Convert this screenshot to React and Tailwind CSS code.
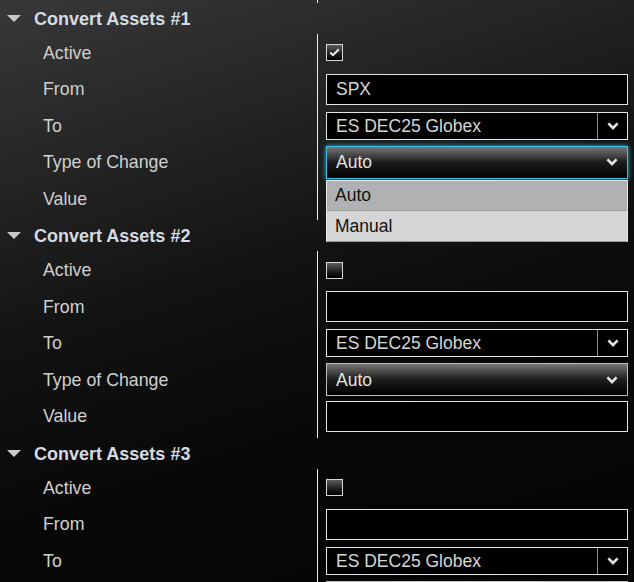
import { Fragment } from "react";

const sections = [
  { id: 1, active: true, from: "SPX", to: "ES DEC25 Globex", change: "Auto", focused: true },
  { id: 2, active: false, from: "", to: "ES DEC25 Globex", change: "Auto", focused: false },
  { id: 3, active: false, from: "", to: "ES DEC25 Globex", change: "Auto", focused: false },
];

const labels = ["Active", "From", "To", "Type of Change", "Value"];

const Chevron = () => (
  <svg width="12" height="8" viewBox="0 0 12 8" fill="none">
    <path d="M1.4 1.4 L6 6 L10.6 1.4" stroke="#e2e2e2" strokeWidth="2.7" strokeLinejoin="miter" />
  </svg>
);

const Checkbox = ({ checked }) => (
  <div className="flex h-[17px] w-[17px] items-center justify-center border border-[#d6d6d6] bg-[linear-gradient(#5c5c5c,#1c1c1c_60%,#000)]">
    {checked && (
      <svg width="11" height="9" viewBox="0 0 11 9" fill="none">
        <path d="M1.2 4.6 L4 7.2 L9.8 1.2" stroke="#f0f0f0" strokeWidth="2" />
      </svg>
    )}
  </div>
);

const TextBox = ({ value }) => (
  <div className="flex h-[31px] w-full items-center border border-[#e4e4e4] bg-black pl-[9px] text-[17.5px] leading-[20px] text-[#d6d6d6]">
    {value}
  </div>
);

const ComboBox = ({ value }) => (
  <div className="flex h-[28px] w-full border border-[#e4e4e4] bg-black text-[17.5px] leading-[20px] text-[#d6d6d6]">
    <div className="flex flex-1 items-center pl-[9px]">{value}</div>
    <div className="flex w-[30px] items-center justify-center border-l border-[#8c8c8c]">
      <Chevron />
    </div>
  </div>
);

const ChangeSelect = ({ value, focused }) => (
  <div className="relative w-full">
    <div
      className={
        focused
          ? "flex h-[33px] w-full items-center justify-between border border-[#3ac3e6] bg-[linear-gradient(#767676,#1c1c1c_50%,#000)] pl-[9px] pr-[9px] text-[17.5px] leading-[20px] text-[#e2e2e2] shadow-[0_0_5px_#2fb7dc]"
          : "flex h-[33px] w-full items-center justify-between border border-[#bdbdbd] bg-[linear-gradient(#767676,#1c1c1c_50%,#000)] pl-[9px] pr-[9px] text-[17.5px] leading-[20px] text-[#e2e2e2]"
      }
    >
      <span>{value}</span>
      <Chevron />
    </div>
    {focused && (
      <div className="absolute left-0 right-0 top-[34px] z-10 border border-[#e8e8e8] border-b-[#9a9a9a] text-[17.5px] leading-[20px] text-[#111]">
        <div className="flex h-[30px] items-center border-b border-[#9c9c9c] bg-[#b0b1b3] pl-[8px]">Auto</div>
        <div className="flex h-[30px] items-center bg-[#d4d5d7] pl-[8px]">Manual</div>
      </div>
    )}
  </div>
);

const Section = ({ section }) => {
  const controls = [
    <Checkbox checked={section.active} />,
    <TextBox value={section.from} />,
    <ComboBox value={section.to} />,
    <ChangeSelect value={section.change} focused={section.focused} />,
    <TextBox value="" />,
  ];

  return (
    <div>
      <div className="flex h-[31px] items-center">
        <svg className="ml-[7px]" width="14" height="7" viewBox="0 0 14 7">
          <path d="M0 0 L14 0 L7 7 Z" fill="#c9c9c9" />
        </svg>
        <span className="ml-[13px] mt-[1px] text-[18px] font-bold leading-[22px] text-[#d4dbe4]">
          Convert Assets #{section.id}
        </span>
      </div>
      <div className="flex">
        <div className="w-[317px] pb-[3px] pt-[1px]">
          {labels.map((label) => (
            <div key={label} className="flex h-[36.5px] items-center pl-[43px] text-[17.75px] leading-[20px] text-[#d0d0d0]">
              {label}
            </div>
          ))}
        </div>
        <div className="flex-1 border-l border-[#ececec] pb-[3px] pl-[8px] pr-[6px] pt-[1px]">
          {controls.map((control, i) => (
            <div key={i} className="flex h-[36.5px] items-center">
              {control}
            </div>
          ))}
        </div>
      </div>
    </div>
  );
};

export default function App() {
  return (
    <div className="h-[582px] w-[634px] overflow-hidden bg-[linear-gradient(162deg,#383838_0%,#262626_22%,#121212_45%,#070707_70%,#040404_100%)] [font-family:'Liberation_Sans',Arial,sans-serif]">
      <div className="ml-[317px] h-[2.5px] border-l border-[#ececec]" />
      {sections.map((section) => (
        <Fragment key={section.id}>
          <Section section={section} />
        </Fragment>
      ))}
    </div>
  );
}
